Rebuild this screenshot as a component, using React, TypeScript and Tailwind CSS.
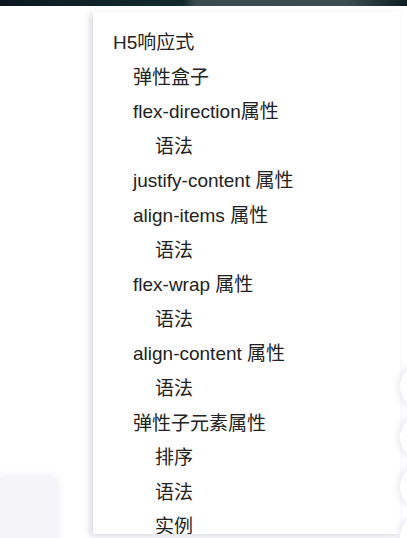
import React from 'react';

const items: { label: string; level: number }[] = [
  { label: 'H5响应式', level: 0 },
  { label: '弹性盒子', level: 1 },
  { label: 'flex-direction属性', level: 1 },
  { label: '语法', level: 2 },
  { label: 'justify-content 属性', level: 1 },
  { label: 'align-items 属性', level: 1 },
  { label: '语法', level: 2 },
  { label: 'flex-wrap 属性', level: 1 },
  { label: '语法', level: 2 },
  { label: 'align-content 属性', level: 1 },
  { label: '语法', level: 2 },
  { label: '弹性子元素属性', level: 1 },
  { label: '排序', level: 2 },
  { label: '语法', level: 2 },
  { label: '实例', level: 2 },
];

export default function App() {
  return (
    <div className="relative h-[538px] w-[407px] overflow-hidden bg-white font-['Liberation_Sans','Noto_Sans_CJK_SC',sans-serif]">
      {/* top banner edge */}
      <div className="h-[6px] w-full bg-[linear-gradient(90deg,#0b1620_0%,#0f2327_18%,#12292c_45%,#3b4b4e_48%,#3d4d50_85%,#0e1d22_100%)]" />

      <div className="flex pt-[6px]">
        {/* left stub card */}
        <div className="w-[93px] shrink-0 flex flex-col justify-end">
          <div className="h-[83px] w-[57px] rounded-r-lg bg-[#f4f4f9] shadow-[0_0_10px_rgba(220,220,235,0.6)]" />
        </div>

        {/* tree panel */}
        <div className="h-[522px] w-[307px] shrink-0 overflow-hidden bg-white pl-5 pt-[14px] text-[19px] text-[#222] shadow-[-3px_2px_6px_rgba(200,200,215,0.7)]">
          {items.map((it, i) => (
            <div
              key={i}
              className={
                'whitespace-nowrap leading-[34.6px] ' +
                (it.level === 0 ? 'pl-0' : it.level === 1 ? 'pl-5' : 'pl-[42px]')
              }
            >
              {it.label}
            </div>
          ))}
        </div>

        {/* right floating circles */}
        <div className="flex flex-col gap-[4px] pt-[352px]">
          <div className="h-[46px] w-[46px] rounded-full bg-white shadow-[0_0_8px_rgba(205,205,225,0.7)]" />
          <div className="h-[46px] w-[46px] rounded-full bg-white shadow-[0_0_8px_rgba(205,205,225,0.7)]" />
          <div className="h-[46px] w-[46px] rounded-full bg-white shadow-[0_0_8px_rgba(205,205,225,0.7)]" />
          <div className="h-[46px] w-[46px] rounded-full bg-white shadow-[0_0_8px_rgba(205,205,225,0.7)]" />
        </div>
      </div>
    </div>
  );
}
